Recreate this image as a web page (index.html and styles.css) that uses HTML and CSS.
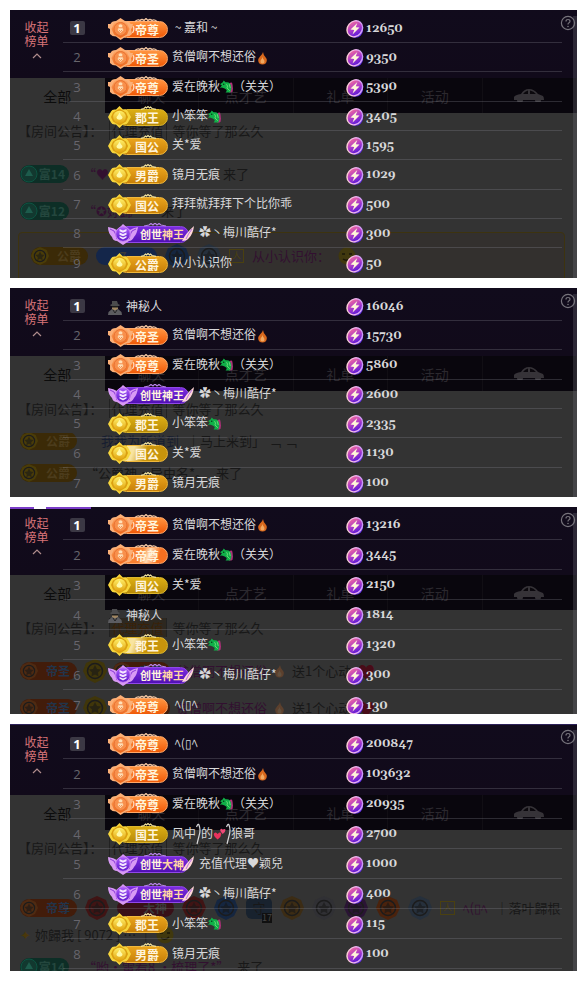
FILE: index.html
```html
<!DOCTYPE html>
<html lang="zh-CN">
<head>
<meta charset="utf-8">
<meta name="viewport" content="width=device-width, initial-scale=1">
<title>榜单</title>
<link rel="stylesheet" href="styles.css">
</head>
<body>
<svg class="defs" aria-hidden="true">
  <defs>
    <linearGradient id="g-coin" x1="0.8" y1="0" x2="0.3" y2="1"><stop offset="0" stop-color="#f06a9c"/><stop offset="0.5" stop-color="#b03cc8"/><stop offset="1" stop-color="#5a18d8"/></linearGradient>
    <linearGradient id="g-rim" x1="0" y1="0" x2="1" y2="1"><stop offset="0" stop-color="#ffe0c8"/><stop offset="0.5" stop-color="#f0b4ec"/><stop offset="1" stop-color="#b48cff"/></linearGradient>
    <linearGradient id="g-orange" x1="0" y1="0" x2="0" y2="1"><stop offset="0" stop-color="#ffb070"/><stop offset="1" stop-color="#f06414"/></linearGradient>
    <linearGradient id="g-gold" x1="0" y1="0" x2="0" y2="1"><stop offset="0" stop-color="#fff06a"/><stop offset="1" stop-color="#e2a410"/></linearGradient>
    <linearGradient id="g-purple" x1="0" y1="0" x2="0" y2="1"><stop offset="0" stop-color="#b060ff"/><stop offset="1" stop-color="#5a14c8"/></linearGradient>
  </defs>
  <symbol id="coin" viewBox="0 0 18 18">
    <ellipse cx="9.4" cy="10" rx="7.6" ry="7.8" fill="#5a28e0"/>
    <ellipse cx="8.8" cy="8.8" rx="9.200" ry="8" fill="url(#g-rim)" transform="rotate(-50 8.8 8.8)"/>
    <ellipse cx="8.8" cy="8.8" rx="7.800" ry="6.600" fill="url(#g-coin)" transform="rotate(-50 8.8 8.8)"/>
    <path d="M11.300 3 4.500 9.600 8.200 9.900 6.500 14.500 13.500 7.400 9.800 7.200Z" fill="#fff6d8"/>
  </symbol>
  <symbol id="orange" viewBox="0 0 60 22">
    <path d="M27 3.500q3-2.500 5-1 2-2 4 0l2-2 2 2q2-2 4 0 2-1.500 5 1" fill="none" stroke="#f4c8a4" stroke-width="1.300"/>
    <path d="M12.500 0 17 3q5 0 5.500 3l2.500 0-1 4-1 1 1 5q-3 3-6 2.500L12.500 22 8 18.500q-4 0-6-2.500l0-5-2-1 0-4 2.500 0q1-3 5.500-3Z" fill="#fbb078"/>
    <path d="M12.500 2 19 5.500 21.500 11 19 16.500 12.500 20 6 16.500 3.500 11 6 5.500Z" fill="url(#g-orange)"/>
    <circle cx="12.500" cy="11" r="6.500" fill="#f8904c" stroke="#e87030"/>
    <path d="M10.500 7.500q2-2.500 4 0L14 9.500l1.500 2.500-3 3-3-3 1.500-2.500Z" fill="#ffe0b8"/>
    <path d="M11 9.800h3M10.800 12l1.700 1.500 1.700-1.500" fill="none" stroke="#f08a50"/>
    <path d="M25 8q2 3-.5 7" fill="none" stroke="#ffdcc0" stroke-width="1.200"/>
  </symbol>
  <symbol id="gold" viewBox="0 0 60 22">
    <path d="M33 3.300l3-.8 1.500-1.500 1 1 1.500-1.500L41.500 2l1-1L44 2.500l4 .8" fill="none" stroke="#f0e2a0" stroke-width="1.200"/>
    <path d="M11.500 0 15 3.500q4-.5 5 2L23 11l-3 5.500q-1 2.500-5 2L11.500 22 8 18.500q-4 .5-5-2L0 11 3 5.500q1-2.500 5-2Z" fill="#f6d53c"/>
    <path d="M11.500 2.500 18 6.500 20 11l-2 4.500-6.500 4-6.500-4L3 11l2-4.500Z" fill="#dba010"/>
    <circle cx="11.500" cy="11" r="6.300" fill="url(#g-gold)"/>
    <path d="M11.500 6.500q1 2.500 3 4.500 0 2.800-3 2.800T8.500 11q2-2 3-4.500Z" fill="#fff9a8"/>
  </symbol>
  <symbol id="purple" viewBox="0 0 86 22">
    <path d="M36 3l5-1 2-1.500L45 2l2-2 2 2 2-1.500L53 2l5 1" fill="none" stroke="#b884e8" stroke-width="1.200"/>
    <path d="M74 18q3-7 12-15-1 8-5 12-2 3-7 3Z" fill="#ffd6d8"/>
    <path d="M78 16q2-5 6-10" stroke="#b470e8" fill="none"/>
    <path d="M0 4q6 1 9 3l6-6 7 6q3-2 8-3-1 7-4 10-2 4-5 4l-6 4-6-4q-4 0-5-4Q0 10 0 4Z" fill="#d89af4"/>
    <path d="M2 6q5 1 6 6l1 4M28 6q-5 1-6 6l-1 4" fill="none" stroke="#8c3cd8"/>
    <circle cx="15" cy="11" r="7.300" fill="url(#g-purple)" stroke="#c880f4"/>
    <path d="m11.500 6 3.500 1.500L18.500 6v2.200L15 9.700l-3.500-1.500Zm0 3.500L15 11l3.500-1.500v2.200L15 13.200l-3.500-1.500Zm0 3.500 3.500 1.500 3.500-1.500v1.500L15 16.500l-3.500-2Z" fill="#f4e6ff"/>
  </symbol>
  <symbol id="flame" viewBox="0 0 12 14">
    <path d="M6.500 1Q7 4 8.500 5.500q1.800 2 1.800 4Q10 13.500 6 13.500T1.700 9.500Q1.700 7.500 3.500 5.500q2.500-2 3-4.500Z" fill="#d8681c"/>
    <path d="M6.200 6q0 2 1.500 3.200 1 3.300-1.700 3.300T4.200 9.200Q5.500 8 6.200 6Z" fill="#f0a860"/>
  </symbol>
  <symbol id="dragon" viewBox="0 0 14 14">
    <path d="M8 5q3-4 5-2.500 1.500 5 .5 9.500Q11 14 9 12Z" fill="#b0307a"/>
    <path d="M0 4 3 2 4 0l2 2q5-1 6 4 1 3-1 7H6q2-2 1-3L5 8.500 2 7.500 0 8l2-3Z" fill="#10b048"/>
    <path d="M7 4q2 2 .5 4l3 3M10 4l1 4" fill="none" stroke="#6cdc78"/>
    <circle cx="4" cy="4" r=".8" fill="#0a3018"/>
  </symbol>
  <symbol id="spy" viewBox="0 0 14 14">
    <path d="M4 0h5l1 3 2 1-1 1H3L2 4l2-1Z" fill="#4c4c4e"/>
    <path d="M4 5h6v3L7 10 4 8Z" fill="#a08662"/>
    <path d="M4 5h6v1.500H4Z" fill="#1c1c1c"/>
    <path d="M4 8 7 9.500 10 8l3.500 3 .5 3H0l.5-3Z" fill="#5c5c60"/>
    <path d="m5 9 2 3 2-3" stroke="#242424" fill="none"/>
  </symbol>
  <symbol id="hearts" viewBox="0 0 14 14">
    <path d="M5 13Q0 9 1 6.500 3 4 5 7q3-3 4 0 0 3-4 6Z" fill="#e8325c"/>
    <path d="M10.500 7Q7 4 8 2q1.500-1.500 2.500.5Q12.500.5 13.500 2.500 13.500 5 10.500 7Z" fill="#f04a78"/>
  </symbol>
  <symbol id="curl" viewBox="0 0 5 22"><path d="M.5 4Q2 0 3 2q2 5 0 11-1 4-2 8" fill="none" stroke="#d8d8da" stroke-width="1.200"/></symbol>
  <symbol id="car" viewBox="0 0 30 13">
    <path d="M7 5Q10 0 15 0t9 5l5 2q1 1 1 4h-3a3 3 0 0 1-6 0H9a3 3 0 0 1-6 0H0V8q1-2 7-3Z" fill="#363338"/>
    <path d="M9 5q2-3 5-3.500V5Zm7-3.500Q20 2 22 5h-6Z" fill="#0b080d"/>
    <circle cx="6" cy="11" r="1.800" fill="#363338"/><circle cx="24" cy="11" r="1.800" fill="#363338"/>
  </symbol>
  <symbol id="help" viewBox="0 0 16 16">
    <circle cx="8" cy="8" r="6.600" fill="none" stroke="#77747c" stroke-width="1.200"/>
    <path d="M6 6.500Q6 4.500 8 4.500t2 1.700Q10 7.300 8.700 8 8 8.400 8 9.500" fill="none" stroke="#77747c" stroke-width="1.200"/>
    <circle cx="8" cy="11.500" r=".8" fill="#77747c"/>
  </symbol>
  <symbol id="chevron" viewBox="0 0 10 6"><path d="m1 5 4-4 4 4" fill="none" stroke="#b08d8d" stroke-width="1.200"/></symbol>
  <symbol id="leaf" viewBox="0 0 18 18"><circle cx="9" cy="9" r="8" fill="#12382f" stroke="#0c5442"/><path d="M9 4l4 7H5Z" fill="#1d5c4c"/></symbol>
  <symbol id="medal" viewBox="0 0 24 24"><path d="m12 0 9 4 3 8-4 8-8 4-8-4-4-8 3-8Z" fill="currentColor"/><circle cx="12" cy="12" r="7.500" fill="none" stroke="#1c1c1c" stroke-width="1.500"/><path d="m12 6 2 4 4 .5-3 3 .5 4-3.500-2-3.500 2 .5-4-3-3 4-.5Z" fill="#171717" opacity=".6"/></symbol>
  <symbol id="face" viewBox="0 0 18 18"><circle cx="9" cy="9" r="8.500" fill="#40380e"/><path d="M4 7h3M11 7h3M5 12q4 3 8-1" fill="none" stroke="#1a1708" stroke-width="1.500"/></symbol>
</svg>

<main class="boards">
  <section class="panel">
    <div class="backdrop" aria-hidden="true">
      <div class="tabs"><span class="current">全部</span><span>聊天</span><span>点才艺</span><span>礼单</span><span>活动</span><span><svg class="car"><use href="#car"/></svg></span></div>
      <p class="notice">【房间公告】：<span class="tag">代理充值</span>等你等了那么久</p>
      <p class="feed"><span class="pill teal"><svg><use href="#leaf"/></svg>富14</span><span class="plum lead">“♥</span><span class="far">来了</span></p>
      <p class="feed"><span class="pill teal"><svg><use href="#leaf"/></svg>富12</span><span class="plum lead">“✪妳歸</span><span class="mid">来了</span></p>
      <div class="framed"><span class="pill ochre"><svg><use href="#medal"/></svg>公爵</span><span class="pill blue">7</span><svg class="medal navy"><use href="#medal"/></svg><svg class="medal steel"><use href="#medal"/></svg><span class="chip">人</span><span class="plum">从小认识你：</span><svg class="face"><use href="#face"/></svg></div>
    </div>
    <button class="toggle" type="button">收起<br>榜单<svg><use href="#chevron"/></svg></button>
    <table class="rank">
      <tr><td class="no"><b>1</b></td><td class="who"><span class="badge orange"><svg><use href="#orange"/></svg><b>帝尊</b></span>&nbsp;~ 嘉和 ~</td><td class="score"><svg><use href="#coin"/></svg>12650</td></tr>
      <tr><td class="no">2</td><td class="who"><span class="badge orange"><svg><use href="#orange"/></svg><b>帝圣</b></span>贫僧啊不想还俗<svg class="emoji"><use href="#flame"/></svg></td><td class="score"><svg><use href="#coin"/></svg>9350</td></tr>
      <tr><td class="no">3</td><td class="who"><span class="badge orange"><svg><use href="#orange"/></svg><b>帝尊</b></span>爱在晚秋<svg class="emoji"><use href="#dragon"/></svg>（关关）</td><td class="score"><svg><use href="#coin"/></svg>5390</td></tr>
      <tr><td class="no">4</td><td class="who"><span class="badge yellow"><svg><use href="#gold"/></svg><b>郡王</b></span>小笨笨<svg class="emoji"><use href="#dragon"/></svg></td><td class="score"><svg><use href="#coin"/></svg>3405</td></tr>
      <tr><td class="no">5</td><td class="who"><span class="badge gold"><svg><use href="#gold"/></svg><b>国公</b></span>关*爱</td><td class="score"><svg><use href="#coin"/></svg>1595</td></tr>
      <tr><td class="no">6</td><td class="who"><span class="badge gold"><svg><use href="#gold"/></svg><b>男爵</b></span>镜月无痕</td><td class="score"><svg><use href="#coin"/></svg>1029</td></tr>
      <tr><td class="no">7</td><td class="who"><span class="badge gold"><svg><use href="#gold"/></svg><b>国公</b></span>拜拜就拜拜下个比你乖</td><td class="score"><svg><use href="#coin"/></svg>500</td></tr>
      <tr><td class="no">8</td><td class="who"><span class="badge purple"><svg><use href="#purple"/></svg><b>创世<i>神王</i></b></span>✿丶梅川酷仔*</td><td class="score"><svg><use href="#coin"/></svg>300</td></tr>
      <tr><td class="no">9</td><td class="who"><span class="badge gold"><svg><use href="#gold"/></svg><b>公爵</b></span>从小认识你</td><td class="score"><svg><use href="#coin"/></svg>50</td></tr>
    </table>
    <button class="help" type="button" aria-label="帮助"><svg><use href="#help"/></svg></button>
  </section>

  <section class="panel">
    <div class="backdrop" aria-hidden="true">
      <div class="tabs"><span class="current">全部</span><span>聊天</span><span>点才艺</span><span>礼单</span><span>活动</span><span><svg class="car"><use href="#car"/></svg></span></div>
      <p class="notice">【房间公告】：<span class="tag">代理充值</span>等你等了那么久</p>
      <div class="older">
        <p class="feed tight"><span class="pill ochre"><svg><use href="#medal"/></svg>公爵</span><span class="navytext">我我为所道到</span><span>｜马上来到」 ﹁ ﹁</span></p>
        <p class="feed tight"><span class="pill ochre"><svg><use href="#medal"/></svg>公爵</span><span>“公爵神·异由名*。</span><span>来了</span></p>
      </div>
    </div>
    <button class="toggle" type="button">收起<br>榜单<svg><use href="#chevron"/></svg></button>
    <table class="rank">
      <tr><td class="no"><b>1</b></td><td class="who"><svg class="spy"><use href="#spy"/></svg>神秘人</td><td class="score"><svg><use href="#coin"/></svg>16046</td></tr>
      <tr><td class="no">2</td><td class="who"><span class="badge orange"><svg><use href="#orange"/></svg><b>帝圣</b></span>贫僧啊不想还俗<svg class="emoji"><use href="#flame"/></svg></td><td class="score"><svg><use href="#coin"/></svg>15730</td></tr>
      <tr><td class="no">3</td><td class="who"><span class="badge orange"><svg><use href="#orange"/></svg><b>帝尊</b></span>爱在晚秋<svg class="emoji"><use href="#dragon"/></svg>（关关）</td><td class="score"><svg><use href="#coin"/></svg>5860</td></tr>
      <tr><td class="no">4</td><td class="who"><span class="badge purple"><svg><use href="#purple"/></svg><b>创世神王</b></span>✿丶梅川酷仔*</td><td class="score"><svg><use href="#coin"/></svg>2600</td></tr>
      <tr><td class="no">5</td><td class="who"><span class="badge yellow"><svg><use href="#gold"/></svg><b>郡王</b></span>小笨笨<svg class="emoji"><use href="#dragon"/></svg></td><td class="score"><svg><use href="#coin"/></svg>2335</td></tr>
      <tr><td class="no">6</td><td class="who"><span class="badge gold shine"><svg><use href="#gold"/></svg><b>国公</b></span>关*爱</td><td class="score"><svg><use href="#coin"/></svg>1130</td></tr>
      <tr><td class="no">7</td><td class="who"><span class="badge gold"><svg><use href="#gold"/></svg><b>男爵</b></span>镜月无痕</td><td class="score"><svg><use href="#coin"/></svg>100</td></tr>
    </table>
    <button class="help" type="button" aria-label="帮助"><svg><use href="#help"/></svg></button>
  </section>

  <section class="panel roomy clipped">
    <div class="backdrop" aria-hidden="true">
      <div class="tabs"><span class="current">全部</span><span>聊天</span><span>点才艺</span><span>礼单</span><span>活动</span><span><svg class="car"><use href="#car"/></svg></span></div>
      <p class="notice">【房间公告】：<span class="tag amber">代理充值</span>等你等了那么久</p>
      <p class="feed gifts"><span class="pill rust"><svg><use href="#medal"/></svg>帝圣</span><svg class="medal olive"><use href="#medal"/></svg><span class="pill rust"><svg><use href="#medal"/></svg>帝圣</span><span class="plum">贫僧啊不想还俗</span><svg class="emoji dim"><use href="#flame"/></svg><span>送1个心动</span><span class="red">♥</span></p>
      <p class="feed gifts"><span class="pill rust"><svg><use href="#medal"/></svg>帝圣</span><svg class="medal olive"><use href="#medal"/></svg><span class="pill rust"><svg><use href="#medal"/></svg>帝圣</span><span class="plum">贫僧啊不想还俗</span><svg class="emoji dim"><use href="#flame"/></svg><span>送1个心动</span><span class="red">♥</span></p>
    </div>
    <div class="ribbon" aria-hidden="true"></div>
    <button class="toggle" type="button">收起<br>榜单<svg><use href="#chevron"/></svg></button>
    <table class="rank">
      <tr><td class="no"><b>1</b></td><td class="who"><span class="badge orange"><svg><use href="#orange"/></svg><b>帝圣</b></span>贫僧啊不想还俗<svg class="emoji"><use href="#flame"/></svg></td><td class="score"><svg><use href="#coin"/></svg>13216</td></tr>
      <tr><td class="no">2</td><td class="who"><span class="badge orange shine"><svg><use href="#orange"/></svg><b>帝尊</b></span>爱在晚秋<svg class="emoji"><use href="#dragon"/></svg>（关关）</td><td class="score"><svg><use href="#coin"/></svg>3445</td></tr>
      <tr><td class="no">3</td><td class="who"><span class="badge yellow"><svg><use href="#gold"/></svg><b>国公</b></span>关*爱</td><td class="score"><svg><use href="#coin"/></svg>2150</td></tr>
      <tr><td class="no">4</td><td class="who"><svg class="spy"><use href="#spy"/></svg>神秘人</td><td class="score"><svg><use href="#coin"/></svg>1814</td></tr>
      <tr><td class="no">5</td><td class="who"><span class="badge yellow shine"><svg><use href="#gold"/></svg><b>郡王</b></span>小笨笨<svg class="emoji"><use href="#dragon"/></svg></td><td class="score"><svg><use href="#coin"/></svg>1320</td></tr>
      <tr><td class="no">6</td><td class="who"><span class="badge purple"><svg><use href="#purple"/></svg><b>创世<i>神王</i></b></span>✿丶梅川酷仔*</td><td class="score"><svg><use href="#coin"/></svg>300</td></tr>
      <tr><td class="no">7</td><td class="who"><span class="badge orange"><svg><use href="#orange"/></svg><b>帝尊</b></span>&nbsp;ﾍ(▯ﾍ</td><td class="score"><svg><use href="#coin"/></svg>130</td></tr>
    </table>
    <button class="help" type="button" aria-label="帮助"><svg><use href="#help"/></svg></button>
  </section>

  <section class="panel roomy edged">
    <div class="backdrop" aria-hidden="true">
      <div class="tabs"><span class="current">全部</span><span>聊天</span><span>点才艺</span><span>礼单</span><span>活动</span><span><svg class="car"><use href="#car"/></svg></span></div>
      <p class="notice">【房间公告】：<span class="tag">代理充值</span>等你等了那么久</p>
      <p class="feed medals"><span class="pill rust"><svg><use href="#medal"/></svg>帝尊</span><svg class="medal maroon"><use href="#medal"/></svg><span class="pill wine">大神</span><svg class="medal maroon"><use href="#medal"/></svg><svg class="medal navy"><use href="#medal"/></svg><span class="guard">守<small>17</small></span><svg class="medal bronze"><use href="#medal"/></svg><svg class="medal iron"><use href="#medal"/></svg><svg class="medal violet"><use href="#medal"/></svg><svg class="medal copper"><use href="#medal"/></svg><svg class="medal steel"><use href="#medal"/></svg><span class="chip">人</span><span class="plum">ﾍ(▯ﾍ</span><span>｜落叶歸根</span></p>
      <p class="feed short"><span class="spark">✦</span><span>妳歸我 [ 9072  ] … ｜</span><svg class="face"><use href="#face"/></svg></p>
      <p class="feed"><span class="pill teal"><svg><use href="#leaf"/></svg>富14</span><span class="plum lead">“哟·雷看8 ·梳理了*”</span><span>来了</span></p>
    </div>
    <button class="toggle" type="button">收起<br>榜单<svg><use href="#chevron"/></svg></button>
    <table class="rank">
      <tr><td class="no"><b>1</b></td><td class="who"><span class="badge orange"><svg><use href="#orange"/></svg><b>帝尊</b></span>&nbsp;ﾍ(▯ﾍ</td><td class="score"><svg><use href="#coin"/></svg>200847</td></tr>
      <tr><td class="no">2</td><td class="who"><span class="badge orange"><svg><use href="#orange"/></svg><b>帝圣</b></span>贫僧啊不想还俗<svg class="emoji"><use href="#flame"/></svg></td><td class="score"><svg><use href="#coin"/></svg>103632</td></tr>
      <tr><td class="no">3</td><td class="who"><span class="badge orange"><svg><use href="#orange"/></svg><b>帝尊</b></span>爱在晚秋<svg class="emoji"><use href="#dragon"/></svg>（关关）</td><td class="score"><svg><use href="#coin"/></svg>20935</td></tr>
      <tr><td class="no">4</td><td class="who"><span class="badge yellow"><svg><use href="#gold"/></svg><b>国王</b></span>风中<svg class="curl"><use href="#curl"/></svg>的<svg class="emoji"><use href="#hearts"/></svg><svg class="curl"><use href="#curl"/></svg>狼哥</td><td class="score"><svg><use href="#coin"/></svg>2700</td></tr>
      <tr><td class="no">5</td><td class="who"><span class="badge purple"><svg><use href="#purple"/></svg><b>创世<i>大神</i></b></span>充值代理♥颖兒</td><td class="score"><svg><use href="#coin"/></svg>1000</td></tr>
      <tr><td class="no">6</td><td class="who"><span class="badge purple"><svg><use href="#purple"/></svg><b>创世<i>神王</i></b></span>✿丶梅川酷仔*</td><td class="score"><svg><use href="#coin"/></svg>400</td></tr>
      <tr><td class="no">7</td><td class="who"><span class="badge gold"><svg><use href="#gold"/></svg><b>郡王</b></span>小笨笨<svg class="emoji"><use href="#dragon"/></svg></td><td class="score"><svg><use href="#coin"/></svg>115</td></tr>
      <tr><td class="no">8</td><td class="who"><span class="badge gold"><svg><use href="#gold"/></svg><b>男爵</b></span>镜月无痕</td><td class="score"><svg><use href="#coin"/></svg>100</td></tr>
    </table>
    <button class="help" type="button" aria-label="帮助"><svg><use href="#help"/></svg></button>
  </section>
</main>
</body>
</html>
```

FILE: styles.css
```css
* { box-sizing: border-box; }

body {
  margin: 0;
  background: #fff;
  color: #d8d8da;
  font: 12px/16px "Noto Sans CJK SC", sans-serif;
}

.defs { position: absolute; width: 0; height: 0; }

button { padding: 0; border: 0; background: none; font: inherit; cursor: pointer; }

.boards { display: flex; flex-direction: column; gap: 10px; padding: 10px; }

.panel {
  position: relative;
  isolation: isolate;
  display: flex;
  align-items: flex-start;
  overflow: hidden;
  padding: 4px 15px 0 0;
  background: #333;
}
.panel::after {
  content: "";
  position: absolute;
  inset: 6px 0 0 auto;
  width: 4px;
  background: rgba(110, 110, 120, 0.3);
}
.panel.clipped { padding: 3px 15px 0 0; }
.panel.edged { padding: 5px 15px 2px 0; }
.clipped .rank { margin-bottom: -6px; }

/* dimmed room page behind the ranking */
.backdrop {
  position: absolute;
  inset: 0;
  z-index: -1;
  overflow: hidden;
  padding-top: 68px;
  background: linear-gradient(#110b1c, #110a1a) top / 100% 68px no-repeat;
  color: #181818;
  font-size: 13px;
  white-space: nowrap;
}
.edged .backdrop {
  padding-top: 70px;
  background-size: 100% 70px;
  border-top: 1px solid #2c2058;
}
.tabs {
  display: grid;
  grid-template-columns: repeat(6, 1fr);
  height: 35px;
  background: #09060d;
  color: #2b282e;
  font-size: 14px;
}
.tabs span { display: grid; place-items: center; border-right: 1px solid #110e14; }
.tabs .current { background: #333; color: #0c0c0c; border: 0; }
.car { width: 30px; height: 13px; }

.backdrop p { margin: 0; }
.notice { height: 42px; padding: 9px 0 0 8px; line-height: 18px; }
.tag { margin: 0 6px; padding: 0 2px; border: solid #222; border-width: 0 1px; }
.amber { color: #3a2208; background: #2d2820; }
.feed { display: flex; align-items: center; gap: 8px; height: 37px; padding-left: 10px; }
.feed.tight { height: 32px; }
.older { display: flex; flex-direction: column; justify-content: flex-end; height: 56px; overflow: hidden; }
.older .feed { flex: none; }
.feed.short { height: 26px; gap: 4px; }
.feed.medals { height: 50px; gap: 8px; padding-top: 22px; }
.feed.gifts { gap: 6px; }
.pill {
  display: flex;
  align-items: center;
  justify-content: flex-end;
  min-width: 57px;
  height: 18px;
  padding-right: 7px;
  border-radius: 9px;
  color: #3a3a3a;
  font-size: 12px;
  font-weight: 700;
}
.pill svg { width: 18px; height: 18px; margin-right: auto; }
.teal { min-width: 49px; padding-right: 4px; background: #0d2e26; color: #24473e; }
.ochre { background: #3b2a07; color: #4c3c1c; }
.ochre svg { color: #4a3c08; }
.rust { background: #421c0a; color: #22344a; }
.rust svg { color: #4e2a12; }
.wine { background: #381018; }
.blue { background: #14264a; min-width: 61px; justify-content: center; }
.lead { margin-left: 6px; }
.plum { color: #321030; }
.far { margin-left: 106px; }
.mid { margin-left: 20px; }
.navytext { margin-left: 16px; color: #171e30; }
.red { color: #480c18; font-size: 18px; }
.face { width: 18px; height: 18px; }
.spark { color: #4a380c; }
.chip { width: 15px; height: 14px; border: 1px solid #4a4010; color: #4a4010; font-size: 9px; line-height: 12px; text-align: center; }
.guard { position: relative; width: 26px; height: 22px; border-radius: 6px; background: #18222e; text-align: center; line-height: 22px; }
.guard small { position: absolute; right: 0; bottom: -4px; background: #101010; color: #444; font-size: 9px; line-height: 10px; }
.medal { flex: none; width: 24px; height: 24px; }
.navy { color: #152640; }
.steel { color: #26303c; }
.olive { color: #40360a; }
.maroon { color: #401414; }
.bronze { color: #3c2c14; }
.iron { color: #303034; }
.violet { color: #2a1434; }
.copper { color: #4a220c; }
.dim { opacity: 0.25; }
.framed {
  display: flex;
  align-items: center;
  gap: 8px;
  height: 60px;
  margin: 3px 12px 0 8px;
  padding: 0 0 12px 12px;
  border: 1px solid #3d330f;
  border-radius: 4px;
  background: #33302e;
}

.ribbon {
  position: absolute;
  top: 0;
  left: 0;
  width: 81px;
  height: 2px;
  background: linear-gradient(90deg, #7a3cc8 30%, #fff 30% 45%, #7a3cc8 45%);
}

.toggle { flex: none; width: 53px; padding-top: 6px; color: #d87478; line-height: 14px; text-align: center; }
.toggle svg { display: block; width: 10px; height: 6px; margin: 5px auto 0; }

.help { position: absolute; top: 5px; right: 1px; z-index: 1; width: 16px; height: 16px; }
.help svg { display: block; width: 16px; height: 16px; }

/* ranking */
.rank { flex: 1; table-layout: fixed; border-spacing: 0; }
.rank tr { height: 29px; }
.rank tr:nth-child(3n) { height: 30px; }
.roomy .rank tr { height: 30px; }
.rank td { padding: 0; border-bottom: 1px solid rgba(140, 140, 150, 0.28); white-space: nowrap; vertical-align: middle; }
.panel:not(.edged) .rank tr:last-child td { border-bottom: 0; }

.rank .no { width: 45px; padding-right: 17px; color: #67656c; font: 13px/14px "Open Sans", sans-serif; text-align: center; }
.no b { display: block; width: 15px; height: 14px; margin: 0 auto; border-radius: 2px; background: #3b3844; color: #fff; }

.who { width: 238px; line-height: 22px; }
.badge { position: relative; display: inline-block; width: 60px; height: 22px; margin-right: 4px; vertical-align: middle; }
.badge svg { position: absolute; inset: 0; width: 100%; height: 100%; }
.badge b {
  display: block;
  height: 17px;
  margin: 3px 0 0 10px;
  padding-left: 16px;
  border: 1px solid #ffa868;
  border-radius: 9px;
  background: linear-gradient(#ff9440, #f05a08);
  color: #fff4dc;
  line-height: 15px;
}
.badge i { color: #ffd6a4; font-style: normal; }
.yellow b { border-color: #dcb62c; background: linear-gradient(#dcae14, #b88a08); }
.gold b { border-color: #f0b83c; background: linear-gradient(#eaa41c, #c88008); }
.orange.shine b { background: linear-gradient(110deg, #f88030 45%, #ffdcb4 60%, #f87020 80%); }
.yellow.shine b, .gold.shine b { background: linear-gradient(110deg, #f8e4a0 30%, #c8940c 55%); }
.purple { width: 86px; margin-right: 5px; }
.purple b { margin-right: 5px; padding-left: 21px; border-color: #9048e8; background: linear-gradient(#7c2ce0, #5010b4); font-size: 11px; }

.emoji { width: 13px; height: 14px; vertical-align: middle; }
.curl { width: 5px; height: 22px; vertical-align: middle; }
.spy { width: 14px; height: 14px; margin-right: 4px; vertical-align: middle; }

.rank .score { padding-top: 2px; font: 700 12px/18px Georgia, Gelasio, "DejaVu Serif", serif; }
.score svg { width: 18px; height: 18px; margin-right: 2px; vertical-align: middle; }
```
